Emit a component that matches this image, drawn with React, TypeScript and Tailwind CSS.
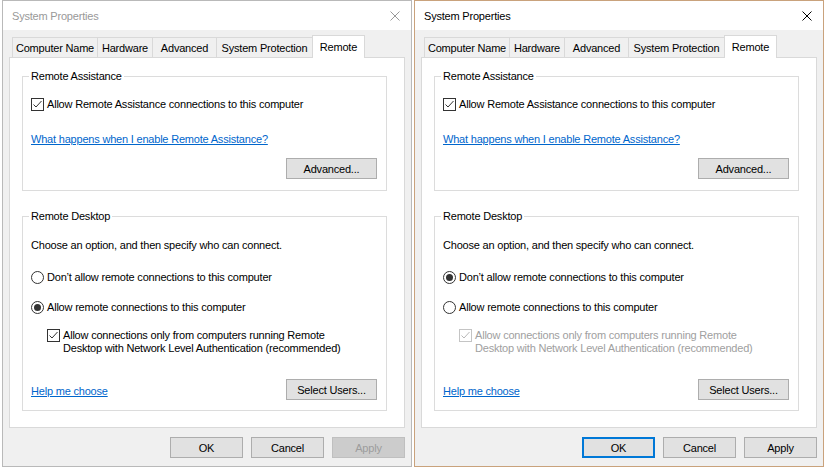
import type { ReactNode } from 'react'

type CheckProps = { checked?: boolean; disabled?: boolean }

function Check({ checked = true, disabled = false }: CheckProps) {
  return (
    <span
      className={`flex h-[13px] w-[13px] shrink-0 items-center justify-center border bg-white ${
        disabled ? 'border-[#c4c4c4]' : 'border-[#333333]'
      }`}
    >
      {checked && (
        <svg width="11" height="11" viewBox="0 0 11 11">
          <path
            d="M1.5 5.5 L4 8 L9.5 2"
            fill="none"
            stroke={disabled ? '#b8b8b8' : '#333333'}
            strokeWidth="1"
          />
        </svg>
      )}
    </span>
  )
}

function Radio({ checked }: { checked: boolean }) {
  return (
    <span className="flex h-[13px] w-[13px] shrink-0 items-center justify-center rounded-full border border-[#333333] bg-white">
      {checked && <span className="h-[7px] w-[7px] rounded-full bg-[#333333]" />}
    </span>
  )
}

type BtnProps = {
  children: ReactNode
  width: string
  disabled?: boolean
  focused?: boolean
}

function Btn({ children, width, disabled, focused }: BtnProps) {
  let tone = 'border border-[#adadad] bg-[#e1e1e1] text-black'
  if (disabled) tone = 'border border-[#bfbfbf] bg-[#cccccc] text-[#9c9c9c]'
  if (focused) tone = 'border-2 border-[#0078d7] bg-[#e1e1e1] text-black'
  return <div className={`flex h-[21px] items-center justify-center ${width} ${tone}`}>{children}</div>
}

const tabs = [
  { label: 'Computer Name', width: 'w-[86px]' },
  { label: 'Hardware', width: 'w-[55px]' },
  { label: 'Advanced', width: 'w-[64px]' },
  { label: 'System Protection', width: 'w-[96px]' },
]

function Dialog({ active }: { active: boolean }) {
  const ink = active ? '#000000' : '#999999'

  return (
    <div
      className={`flex h-[467px] w-[410px] shrink-0 flex-col border bg-[#f0f0f0] ${
        active ? 'border-[#c9a27c]' : 'border-[#b9b9b9]'
      }`}
    >
      {/* title bar */}
      <div className="flex h-[29px] items-center justify-between bg-white pl-[9px] pr-[11px]">
        <span className={active ? 'text-black' : 'text-[#999999]'}>System Properties</span>
        <svg width="10" height="10" viewBox="0 0 10 10">
          <path d="M0.5 0.5 L9.5 9.5 M9.5 0.5 L0.5 9.5" stroke={ink} strokeWidth="1" />
        </svg>
      </div>

      <div className="px-[6px] pt-[5px]">
        {/* tabs */}
        <div className="flex h-[22px] items-end pl-[3px]">
          {tabs.map((t, i) => (
            <div
              key={t.label}
              className={`flex h-[20px] items-center justify-center border-t border-r border-[#d9d9d9] bg-[#f0f0f0] ${
                i === 0 ? 'border-l' : ''
              } ${t.width}`}
            >
              {t.label}
            </div>
          ))}
          <div className="relative z-10 -mb-px -ml-px flex h-[23px] w-[53px] items-center justify-center border border-b-0 border-[#d9d9d9] bg-white pb-[1px]">
            Remote
          </div>
        </div>

        {/* tab page */}
        <div className="h-[371px] border border-[#d9d9d9] bg-white pl-[12px] pt-[11px]">
          <fieldset className="w-[365px] border border-[#dcdcdc] pr-[9px] pb-[11px] pl-[8px]">
            <legend className="-ml-[2px] px-[2px] leading-[14px]">Remote Assistance</legend>
            <div className="mt-[14px] flex items-center gap-[3px]">
              <Check />
              <span>Allow Remote Assistance connections to this computer</span>
            </div>
            <div className="mt-[21px] w-fit text-[#0066cc] underline">
              What happens when I enable Remote Assistance?
            </div>
            <div className="mt-[12px] flex justify-end">
              <Btn width="w-[91px]">Advanced...</Btn>
            </div>
          </fieldset>

          <fieldset className="mt-[18px] w-[365px] border border-[#dcdcdc] pr-[9px] pb-[10px] pl-[8px]">
            <legend className="-ml-[2px] px-[2px] leading-[14px]">Remote Desktop</legend>
            <p className="mt-[15px]">Choose an option, and then specify who can connect.</p>
            <div className="mt-[18px] flex items-center gap-[3px]">
              <Radio checked={active} />
              <span>Don’t allow remote connections to this computer</span>
            </div>
            <div className="mt-[16px] flex items-center gap-[3px]">
              <Radio checked={!active} />
              <span>Allow remote connections to this computer</span>
            </div>
            <div className="mt-[15px] ml-[16px] flex items-start gap-[3px] leading-[13px]">
              <Check disabled={active} />
              <span className={active ? 'text-[#a0a0a0]' : ''}>
                Allow connections only from computers running Remote
                <br />
                Desktop with Network Level Authentication (recommended)
              </span>
            </div>
            <div className="mt-[24px] flex items-end justify-between">
              <span className="pb-[2px] text-[#0066cc] underline">Help me choose</span>
              <Btn width="w-[91px]">Select Users...</Btn>
            </div>
          </fieldset>
        </div>
      </div>

      {/* dialog buttons */}
      <div className="mt-[9px] flex justify-end gap-[8px] pr-[6px]">
        <Btn width="w-[73px]" focused={active}>
          OK
        </Btn>
        <Btn width="w-[73px]">Cancel</Btn>
        <Btn width="w-[73px]" disabled={!active}>
          Apply
        </Btn>
      </div>
    </div>
  )
}

export default function App() {
  return (
    <div className="flex h-[468px] w-[824px] items-start gap-[2px] overflow-hidden bg-white pl-[2px] text-[11px] leading-[14px] tracking-[-0.2px] text-black [font-family:'Liberation_Sans',Arial,sans-serif]">
      <Dialog active={false} />
      <Dialog active />
    </div>
  )
}
